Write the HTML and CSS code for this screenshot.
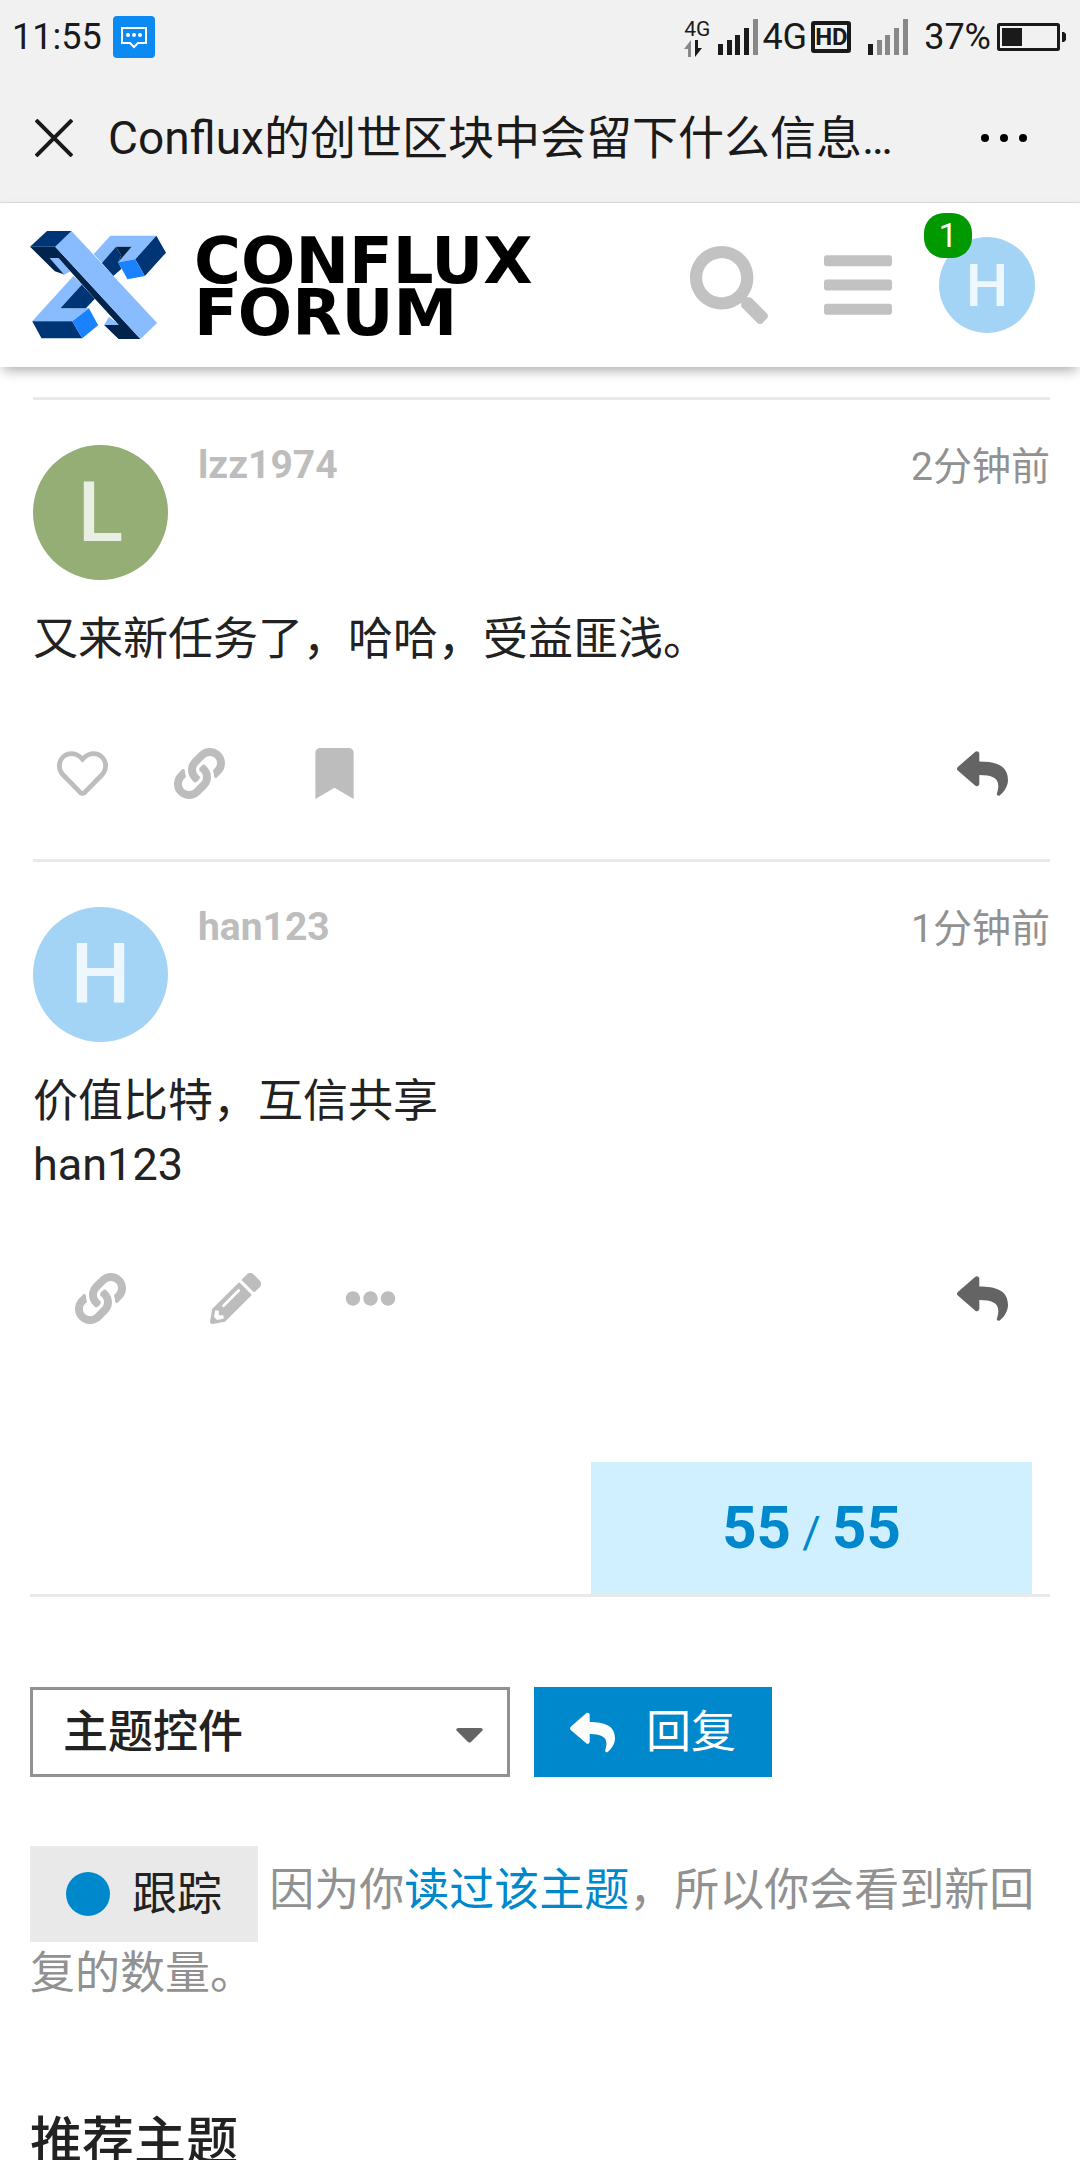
FILE: index.html
```html
<!DOCTYPE html>
<html lang="zh-CN">
<head>
    <meta charset="utf-8">
    <meta name="viewport" content="width=device-width, initial-scale=1">
    <title>Conflux Forum</title>
    <link rel="stylesheet" href="styles.css">
</head>
<body>

    <!-- shared icons -->
    <svg class="sprite" aria-hidden="true">
        <symbol id="i-link" viewBox="0 0 512 512"><path d="M326.612 185.391c59.747 59.809 58.927 155.698.36 214.59-.11.12-.24.25-.36.37l-67.2 67.2c-59.27 59.27-155.699 59.262-214.96 0-59.27-59.26-59.27-155.7 0-214.96l37.106-37.106c9.84-9.84 26.786-3.3 27.294 10.606.648 17.722 3.826 35.527 9.69 52.721 1.986 5.822.567 12.262-3.783 16.612l-13.087 13.087c-28.026 28.026-28.905 73.66-1.155 101.96 28.024 28.579 74.086 28.749 102.325.51l67.2-67.19c28.191-28.191 28.073-73.757 0-101.83-3.701-3.694-7.429-6.564-10.341-8.569a16.037 16.037 0 0 1-6.947-12.606c-.396-10.567 3.348-21.456 11.698-29.806l21.054-21.055c5.521-5.521 14.182-6.199 20.584-1.731a152.482 152.482 0 0 1 20.522 17.197zM467.547 44.449c-59.261-59.262-155.69-59.27-214.96 0l-67.2 67.2c-.12.12-.25.25-.36.37-58.566 58.892-59.387 154.781.36 214.59a152.454 152.454 0 0 0 20.521 17.196c6.402 4.468 15.064 3.789 20.584-1.731l21.054-21.055c8.35-8.35 12.094-19.239 11.698-29.806a16.037 16.037 0 0 0-6.947-12.606c-2.912-2.005-6.64-4.875-10.341-8.569-28.073-28.073-28.191-73.639 0-101.83l67.2-67.19c28.239-28.239 74.3-28.069 102.325.51 27.75 28.3 26.872 73.934-1.155 101.96l-13.087 13.087c-4.35 4.35-5.769 10.79-3.783 16.612 5.864 17.194 9.042 34.999 9.69 52.721.509 13.906 17.454 20.446 27.294 10.606l37.106-37.106c59.271-59.259 59.271-155.699.001-214.959z"/></symbol>
        <symbol id="i-heart" viewBox="0 0 512 512"><path d="M458.4 64.3C400.6 15.7 311.3 23 256 79.3 200.7 23 111.4 15.6 53.6 64.3-21.6 127.6-10.6 230.8 43 285.5l175.4 178.7c10 10.2 23.4 15.9 37.6 15.9 14.3 0 27.6-5.6 37.6-15.8L469 285.6c53.5-54.7 64.7-157.9-10.6-221.3zm-23.6 187.5L259.4 430.5c-2.4 2.4-4.4 2.4-6.8 0L77.2 251.8c-36.5-37.2-43.9-107.6 7.3-150.7 38.9-32.7 98.9-27.8 136.5 10.5l35 35.7 35-35.7c37.8-38.5 97.8-43.2 136.5-10.6 51.1 43.1 43.5 113.9 7.3 150.8z"/></symbol>
        <symbol id="i-bookmark" viewBox="0 0 384 512"><path d="M0 512V48C0 21.49 21.49 0 48 0h288c26.51 0 48 21.49 48 48v464L192 400 0 512z"/></symbol>
        <symbol id="i-reply" viewBox="0 0 512 512"><path d="M8.309 189.836L184.313 37.851C199.719 24.546 224 35.347 224 56.015v80.053c160.629 1.839 288 34.032 288 186.258 0 61.441-39.581 122.309-83.333 154.132-13.653 9.931-33.111-2.533-28.077-18.631 45.344-145.012-21.507-183.51-176.59-185.742V360c0 20.7-24.3 31.453-39.687 18.164l-176.004-152c-11.071-9.562-11.086-26.753 0-36.328z"/></symbol>
        <symbol id="i-pencil" viewBox="0 0 512 512"><path d="M497.9 142.1l-46.1 46.1c-4.7 4.7-12.3 4.7-17 0l-111-111c-4.7-4.7-4.7-12.3 0-17l46.1-46.1c18.7-18.7 49.1-18.7 67.9 0l60.1 60.1c18.8 18.7 18.8 49.1 0 67.9zM284.2 99.8L21.6 362.4.4 483.9c-2.9 16.4 11.4 30.6 27.8 27.8l121.5-21.3 262.6-262.6c4.7-4.7 4.7-12.3 0-17l-111-111c-4.8-4.7-12.4-4.7-17.1 0zM124.1 339.9c-5.5-5.5-5.5-14.3 0-19.8l154-154c5.5-5.5 14.3-5.5 19.8 0s5.5 14.3 0 19.8l-154 154c-5.5 5.5-14.3 5.5-19.8 0zM88 424h48v36.3l-64.5 11.3-31.1-31.1L51.7 376H88v48z"/></symbol>
        <symbol id="i-more" viewBox="0 0 512 512"><path d="M328 256c0 39.8-32.2 72-72 72s-72-32.2-72-72 32.2-72 72-72 72 32.2 72 72zm104-72c-39.8 0-72 32.2-72 72s32.2 72 72 72 72-32.2 72-72-32.2-72-72-72zm-352 0c-39.8 0-72 32.2-72 72s32.2 72 72 72 72-32.2 72-72-32.2-72-72-72z"/></symbol>
    </svg>

    <div class="app-bar">
        <div class="status-bar">
            <span>11:55</span>
            <svg class="msg-icon" viewBox="0 0 42 42">
                <rect width="42" height="42" rx="4" fill="#0b8af4"/>
                <path d="M9 12h24v15h-8l-4 4-4-4H9z" fill="none" stroke="#fff" stroke-width="2"/>
                <g fill="#fff"><circle cx="15" cy="19" r="2"/><circle cx="21" cy="19" r="2"/><circle cx="27" cy="19" r="2"/></g>
            </svg>
            <div class="status-right">
                <div class="data-type">
                    <span>4G</span>
                    <svg width="18" height="17" viewBox="0 0 18 17">
                        <path d="M7 0v17H4V9H0z" fill="#888"/>
                        <path d="M11 17V0h3v8h4z" fill="#1a1a1a"/>
                    </svg>
                </div>
                <svg width="40" height="36" viewBox="0 0 40 36" fill="#1a1a1a">
                    <path d="M0 25h5v11H0zM9 21h5v15H9zM17 16h5v20h-5zM26 9h5v27h-5z"/>
                    <path d="M35 0h5v36h-5z" fill="#888"/>
                </svg>
                <span class="net">4G</span>
                <span class="hd">HD</span>
                <svg class="signal-two" width="40" height="36" viewBox="0 0 40 36" fill="#888">
                    <path d="M0 25h5v11H0z" fill="#1a1a1a"/>
                    <path d="M9 21h5v15H9zM17 16h5v20h-5zM26 9h5v27h-5zM35 0h5v36h-5z"/>
                </svg>
                <span class="percent">37%</span>
                <svg width="69" height="28" viewBox="0 0 69 28">
                    <rect x="1.5" y="1.5" width="60" height="25" rx="1" fill="none" stroke="#1a1a1a" stroke-width="3"/>
                    <path d="M5 5h20v18H5zM65 9h2l2 2v6l-2 2h-2z" fill="#1a1a1a"/>
                </svg>
            </div>
        </div>
        <div class="title-bar">
            <button class="icon-btn" aria-label="关闭">
                <svg width="38" height="38" viewBox="0 0 38 38"><path d="M1 1l36 36M37 1L1 37" stroke="#1a1a1a" stroke-width="4"/></svg>
            </button>
            <span class="page-title">Conflux的创世区块中会留下什么信息…</span>
            <button class="icon-btn" aria-label="更多">
                <svg width="46" height="10" viewBox="0 0 46 10"><circle cx="4" cy="5" r="4"/><circle cx="23" cy="5" r="4"/><circle cx="42" cy="5" r="4"/></svg>
            </button>
        </div>
    </div>

    <header class="site-header">
        <a class="logo" href="#">
            <svg class="logo-mark" viewBox="81 87 367 324" preserveAspectRatio="none">
                <path fill="#89bcff" d="M198 222l25 28-60 69h77l-45 39H87zM253 156l45-55h124l-57 71-46 9 34-47h-40l-38 49z"/>
                <path fill="#003575" d="M221 248l35 42-24 29h-69zM87 358h108l27 51H112zM313 134l14 26-8 21 9 19-22 22-31-39zM422 101l26 51-57 70-26-50z"/>
                <path fill="#00244c" d="M313 134h42l-36 47 8-21z"/>
                <path fill="#1a82ff" d="M319 181l46-9 26 50-47 10zM195 358l45-39 25 51-43 39z"/>
                <path fill="#89bcff" d="M134 168h24l32 40-18 11zM281 369l13-24 30 24z"/>
                <path fill="#00244c" d="M81 134h68l230 277h-59l-39-42h40l-65-79-98-122h-24l38 49-24-9z"/>
                <path fill="#89bcff" d="M193 87l231 276-45 48-230-277z"/>
                <path fill="#003575" d="M127 87h66l-44 47H81z"/>
            </svg>
            <span class="logo-text">CONFLUX<br>FORUM</span>
        </a>
        <nav class="header-icons">
            <button class="icon-btn" aria-label="搜索">
                <svg width="78" height="78" viewBox="0 0 512 512" fill="#c2c2c2"><path d="M505 442.7L405.3 343c-4.5-4.5-10.6-7-17-7H372c27.6-35.3 44-79.7 44-128C416 93.1 322.9 0 208 0S0 93.1 0 208s93.1 208 208 208c48.3 0 92.7-16.4 128-44v16.3c0 6.4 2.5 12.5 7 17l99.7 99.7c9.4 9.4 24.6 9.4 33.9 0l28.3-28.3c9.4-9.4 9.4-24.6.1-34zM208 336c-70.7 0-128-57.2-128-128 0-70.7 57.2-128 128-128 70.7 0 128 57.2 128 128 0 70.7-57.2 128-128 128z"/></svg>
            </button>
            <button class="icon-btn" aria-label="菜单">
                <svg width="68" height="78" viewBox="0 0 448 512" fill="#c2c2c2"><path d="M16 132h416c8.8 0 16-7.2 16-16V76c0-8.8-7.2-16-16-16H16C7.2 60 0 67.2 0 76v40c0 8.8 7.2 16 16 16zm0 160h416c8.8 0 16-7.2 16-16v-40c0-8.8-7.2-16-16-16H16c-8.8 0-16 7.2-16 16v40c0 8.8 7.2 16 16 16zm0 160h416c8.8 0 16-7.2 16-16v-40c0-8.8-7.2-16-16-16H16c-8.8 0-16 7.2-16 16v40c0 8.8 7.2 16 16 16z"/></svg>
            </button>
            <a class="current-user" href="#">
                <span class="avatar avatar-small blue">H</span>
                <span class="badge">1</span>
            </a>
        </nav>
    </header>

    <main>
        <article class="post">
            <div class="post-head">
                <span class="avatar green">L</span>
                <a class="username" href="#">lzz1974</a>
                <a class="post-date" href="#">2分钟前</a>
            </div>
            <p class="post-body">又来新任务了，哈哈，受益匪浅。</p>
            <div class="post-menu">
                <button class="like" aria-label="赞"><svg><use href="#i-heart"/></svg></button>
                <button aria-label="链接"><svg><use href="#i-link"/></svg></button>
                <button aria-label="书签"><svg><use href="#i-bookmark"/></svg></button>
                <button class="reply" aria-label="回复"><svg><use href="#i-reply"/></svg></button>
            </div>
        </article>

        <article class="post">
            <div class="post-head">
                <span class="avatar blue">H</span>
                <a class="username" href="#">han123</a>
                <a class="post-date" href="#">1分钟前</a>
            </div>
            <p class="post-body">价值比特，互信共享<br>han123</p>
            <div class="post-menu">
                <button aria-label="链接"><svg><use href="#i-link"/></svg></button>
                <button aria-label="编辑"><svg><use href="#i-pencil"/></svg></button>
                <button aria-label="更多"><svg><use href="#i-more"/></svg></button>
                <button class="reply" aria-label="回复"><svg><use href="#i-reply"/></svg></button>
            </div>
        </article>

        <div class="progress-row">
            <div class="progress"><b>55</b> / <b>55</b></div>
        </div>

        <div class="topic-controls">
            <div class="select-box">
                <select aria-label="主题控件">
                    <option>主题控件</option>
                </select>
                <svg class="caret" viewBox="0 0 27 15"><path d="M2 0h23q3 1 1 3L15 14q-1.5 1-3 0L1 3Q-1 1 2 0z" fill="#646464"/></svg>
            </div>
            <button class="reply-btn"><svg><use href="#i-reply"/></svg>回复</button>
        </div>

        <p class="tracking">
            <button class="track-btn"><span class="dot"></span>跟踪</button>
            因为你<a href="#">读过该主题</a>，所以你会看到新回复的数量。
        </p>

        <h3>推荐主题</h3>
    </main>

</body>
</html>
```
FILE: styles.css
```css
* {
    box-sizing: border-box;
}

body {
    margin: 0;
    background-color: #fff;
    color: #222;
    font-family: Roboto, "Noto Sans CJK SC", sans-serif;
    font-size: 45px;
    line-height: 63px;
}

a {
    color: #08c;
    text-decoration: none;
}

button {
    display: flex;
    align-items: center;
    justify-content: center;
    padding: 0;
    border: none;
    background: none;
    color: inherit;
    font: inherit;
    cursor: pointer;
}

svg {
    display: block;
    flex-shrink: 0;
}

.sprite {
    display: none;
}

/* phone bars */
.app-bar {
    background-color: #f1f1f1;
    color: #1a1a1a;
    border-bottom: 1px solid #ddd;
}

.status-bar {
    display: flex;
    align-items: center;
    height: 74px;
    padding: 0 14px 0 12px;
    font-size: 36px;
    line-height: 42px;
}

.msg-icon {
    width: 42px;
    height: 42px;
    margin-left: 11px;
}

.status-right {
    display: flex;
    align-items: center;
    margin-left: auto;
}

.data-type {
    margin-right: 8px;
    font-size: 21px;
    line-height: 22px;
}

.net {
    margin-left: 4px;
}

.hd {
    margin-left: 4px;
    border: 4px solid #1a1a1a;
    border-radius: 3px;
    width: 40px;
    font-size: 24px;
    font-weight: bold;
    line-height: 24px;
    text-align: center;
}

.signal-two {
    margin-left: 17px;
}

.percent {
    margin: 0 6px 0 16px;
}

.title-bar {
    display: flex;
    align-items: center;
    height: 128px;
    padding: 0 53px 0 35px;
    font-size: 46px;
}

.page-title {
    flex: 1;
    margin-left: 35px;
    white-space: nowrap;
}

/* forum header */
.site-header {
    display: flex;
    align-items: center;
    justify-content: space-between;
    height: 164px;
    padding: 0 45px 0 30px;
    background-color: #fff;
    box-shadow: 0 6px 12px -3px rgba(0, 0, 0, 0.35);
}

.logo {
    display: flex;
    align-items: center;
    gap: 28px;
    color: #000;
}

.logo-mark {
    width: 136px;
    height: 108px;
}

.logo-text {
    padding-top: 4px;
    font-family: "DejaVu Sans", sans-serif;
    font-size: 64px;
    font-weight: bold;
    line-height: 52px;
}

.header-icons {
    display: flex;
    align-items: center;
}

.header-icons .icon-btn {
    margin-right: 56px;
}

.header-icons .icon-btn + .icon-btn {
    margin-right: 47px;
}

.current-user {
    position: relative;
}

.badge {
    position: absolute;
    top: -24px;
    left: -15px;
    width: 48px;
    height: 45px;
    border-radius: 20px;
    background-color: #090;
    color: #fff;
    font-size: 33px;
    line-height: 45px;
    text-align: center;
}

.avatar {
    display: flex;
    align-items: center;
    justify-content: center;
    width: 135px;
    height: 135px;
    border-radius: 50%;
    color: rgba(255, 255, 255, 0.8);
    font-size: 84px;
    font-weight: 500;
}

.avatar-small {
    width: 96px;
    height: 96px;
    font-size: 60px;
}

.blue {
    background-color: #a4d4f5;
}

.green {
    background-color: #95ae76;
}

/* posts */
main {
    padding: 30px 30px 0;
}

.post {
    margin-left: 3px;
    border-top: 3px solid #e9e9e9;
    padding: 45px 0 13px;
}

.post-head {
    display: flex;
    align-items: flex-start;
    font-size: 39px;
    line-height: 42px;
}

.username {
    margin-left: 30px;
    color: #bdbdbd;
    font-weight: bold;
    line-height: 40px;
}

.post-date {
    margin-left: auto;
    color: #919191;
    line-height: 44px;
}

.post-body {
    margin: 28px 0 30px;
}

.post-menu {
    display: flex;
    color: #bdbdbd;
}

.post-menu button {
    width: 135px;
    height: 145px;
}

.post-menu .like {
    width: 99px;
}

.post-menu .reply {
    margin-left: auto;
    color: #646464;
}

.post-menu svg {
    width: 51px;
    height: 51px;
    fill: currentColor;
}

.progress-row {
    display: flex;
    justify-content: flex-end;
    margin-top: 78px;
    padding-right: 18px;
    border-bottom: 3px solid #e9e9e9;
}

.progress {
    width: 441px;
    padding-top: 10px;
    background-color: #d1f0ff;
    color: #08c;
    line-height: 122px;
    text-align: center;
}

.progress b {
    font-size: 60px;
    line-height: 60px;
}

/* topic footer */
.topic-controls {
    display: flex;
    gap: 24px;
    margin-top: 90px;
}

.select-box {
    position: relative;
    width: 480px;
}

.select-box select {
    appearance: none;
    width: 100%;
    height: 90px;
    padding: 0 30px;
    border: 3px solid #919191;
    border-radius: 0;
    background-color: #fff;
    color: #222;
    font: inherit;
    font-weight: 500;
}

.caret {
    position: absolute;
    top: 41px;
    right: 27px;
    width: 27px;
    height: 15px;
}

.reply-btn {
    gap: 31px;
    height: 90px;
    padding: 0 36px;
    background-color: #08c;
    color: #fff;
}

.reply-btn svg {
    width: 45px;
    height: 45px;
    fill: #fff;
}

.tracking {
    margin: 69px 0 0;
    color: #919191;
}

.track-btn {
    display: inline-flex;
    gap: 22px;
    height: 96px;
    padding: 0 36px;
    background-color: #e9e9e9;
    color: #222;
    vertical-align: middle;
}

.dot {
    width: 44px;
    height: 44px;
    border-radius: 50%;
    background-color: #08c;
}

h3 {
    margin: 102px 0 0;
    font-size: 52px;
    font-weight: 500;
    line-height: 72px;
}
```
